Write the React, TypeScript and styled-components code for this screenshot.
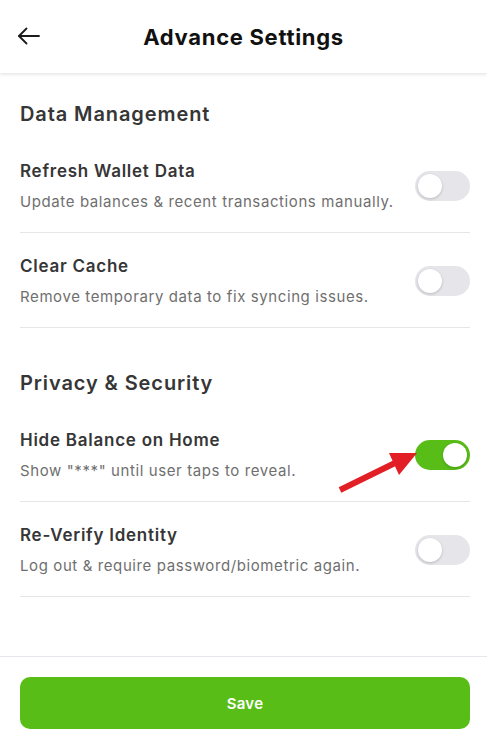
import React, { useState } from 'react';
import styled, { createGlobalStyle } from 'styled-components';

const GlobalStyle = createGlobalStyle`
  * { box-sizing: border-box; }
  html, body { margin: 0; padding: 0; background: #ffffff; }
  body { font-family: Inter, "Open Sans", sans-serif; -webkit-font-smoothing: antialiased; }
`;

type SettingItem = {
    id: string
    title: string
    desc: string
    on: boolean
}

const sections: { title: string; items: SettingItem[] }[] = [
    {
        title: 'Data Management',
        items: [
            {id: 'refresh', title: 'Refresh Wallet Data', desc: 'Update balances & recent transactions manually.', on: false},
            {id: 'cache', title: 'Clear Cache', desc: 'Remove temporary data to fix syncing issues.', on: false},
        ],
    },
    {
        title: 'Privacy & Security',
        items: [
            {id: 'hide', title: 'Hide Balance on Home', desc: 'Show "***" until user taps to reveal.', on: true},
            {id: 'verify', title: 'Re-Verify Identity', desc: 'Log out & require password/biometric again.', on: false},
        ],
    },
];

export default function App() {
    const [state, setState] = useState<Record<string, boolean>>(() => {
        const s: Record<string, boolean> = {};
        sections.forEach(sec => sec.items.forEach(i => { s[i.id] = i.on; }));
        return s;
    });

    return (
        <Page>
            <GlobalStyle/>
            <Header>
                <BackButton aria-label="Back">
                    <svg width="24" height="20" viewBox="0 0 24 20" fill="none" stroke="#1c1c1c" strokeWidth="1.8"
                         strokeLinecap="round" strokeLinejoin="round">
                        <path d="M22 10H2"/>
                        <path d="M9.5 2.5L2 10l7.5 7.5"/>
                    </svg>
                </BackButton>
                <Title>Advance Settings</Title>
            </Header>

            <Content>
                {sections.map(sec => (
                    <Section key={sec.title}>
                        <SectionTitle>{sec.title}</SectionTitle>
                        {sec.items.map(item => (
                            <Row key={item.id}>
                                <RowText>
                                    <RowTitle>{item.title}</RowTitle>
                                    <RowDesc>{item.desc}</RowDesc>
                                </RowText>
                                <ToggleWrap>
                                    <Toggle
                                        $on={state[item.id]}
                                        onClick={() => setState(s => ({...s, [item.id]: !s[item.id]}))}
                                        aria-pressed={state[item.id]}
                                    >
                                        <Thumb $on={state[item.id]}/>
                                    </Toggle>
                                    {item.id === 'hide' && (
                                        <Pointer width="84" height="46" viewBox="0 0 84 46">
                                            <path d="M3 42L60 14" stroke="#e31f26" strokeWidth="6"/>
                                            <polygon points="80,5 52,5 62,27" fill="#e31f26"/>
                                        </Pointer>
                                    )}
                                </ToggleWrap>
                            </Row>
                        ))}
                    </Section>
                ))}
            </Content>

            <Footer>
                <SaveButton>Save</SaveButton>
            </Footer>
        </Page>
    );
}

const Page = styled.div`
  min-height: 100vh;
  display: flex;
  flex-direction: column;
  background: #fff;
`
const Header = styled.header`
  position: relative;
  height: 73px;
  display: flex;
  align-items: center;
  justify-content: center;
  box-shadow: 0 2px 3px rgba(0, 0, 0, 0.09);
`
const BackButton = styled.button`
  position: absolute;
  left: 17px;
  top: 26px;
  padding: 0;
  border: 0;
  background: transparent;
  display: flex;
  cursor: pointer;
`
const Title = styled.h1`
  margin: 0;
  font-size: 22px;
  font-weight: 700;
  color: #111;
  letter-spacing: 0.7px;
`
const Content = styled.main`
  display: flex;
  flex-direction: column;
  gap: 40px;
  padding: 26px 17px 0 20px;
`
const Section = styled.section`
  display: flex;
  flex-direction: column;
`
const SectionTitle = styled.h2`
  margin: 0 0 9px;
  font-size: 20px;
  line-height: 30px;
  font-weight: 600;
  color: #363636;
  letter-spacing: 0.9px;
`
const Row = styled.div`
  display: flex;
  align-items: center;
  justify-content: space-between;
  padding: 21px 0 20px;
  border-bottom: 1px solid #e6e6e6;
`
const RowText = styled.div`
  display: flex;
  flex-direction: column;
  gap: 9px;
`
const RowTitle = styled.div`
  font-size: 17px;
  line-height: 24px;
  font-weight: 600;
  color: #363636;
  letter-spacing: 0.75px;
`
const RowDesc = styled.div`
  font-size: 15px;
  line-height: 20px;
  color: #6f6f6f;
  letter-spacing: 0.6px;
`
const ToggleWrap = styled.div`
  position: relative;
  display: flex;
`
const Toggle = styled.button<{ $on: boolean }>`
  width: 55px;
  height: 30px;
  padding: 0;
  border: 0;
  border-radius: 15px;
  background: ${p => p.$on ? '#58bd17' : '#e5e5ea'};
  position: relative;
  cursor: pointer;
`
const Thumb = styled.span<{ $on: boolean }>`
  position: absolute;
  top: 3px;
  left: ${p => p.$on ? '28px' : '3px'};
  width: 24px;
  height: 24px;
  border-radius: 50%;
  background: #fff;
  box-shadow: 0 1px 3px rgba(0, 0, 0, 0.2);
`
const Pointer = styled.svg`
  position: absolute;
  left: -78px;
  top: 8px;
  pointer-events: none;
`
const Footer = styled.footer`
  margin-top: auto;
  border-top: 1px solid #e6e6ec;
  padding: 20px 17px 14px 20px;
`
const SaveButton = styled.button`
  width: 100%;
  height: 52px;
  border: 0;
  border-radius: 10px;
  background: #58bd17;
  color: #fff;
  font-family: Inter, "Open Sans", sans-serif;
  font-size: 15px;
  font-weight: 600;
  letter-spacing: 0.3px;
  cursor: pointer;
`
